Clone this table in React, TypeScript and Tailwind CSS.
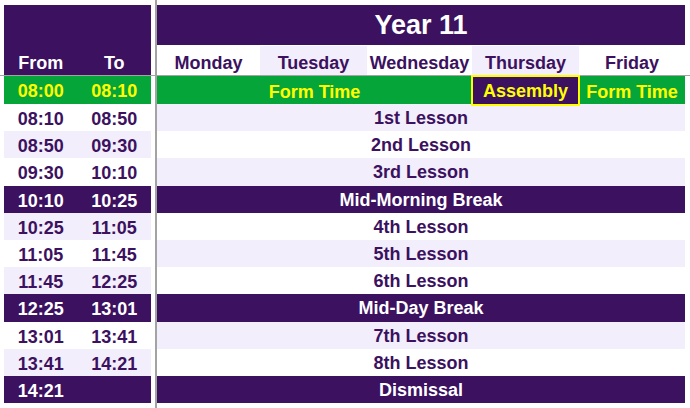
import React from "react";

type Row = {
    from: string;
    to: string;
    label: string;
    isBreak?: boolean;
    leftShade?: boolean;
    rightShade?: boolean;
};

const rows: Row[] = [
    { from: "08:10", to: "08:50", label: "1st Lesson", rightShade: true },
    { from: "08:50", to: "09:30", label: "2nd Lesson", leftShade: true },
    { from: "09:30", to: "10:10", label: "3rd Lesson", rightShade: true },
    { from: "10:10", to: "10:25", label: "Mid-Morning Break", isBreak: true },
    { from: "10:25", to: "11:05", label: "4th Lesson", leftShade: true },
    { from: "11:05", to: "11:45", label: "5th Lesson", rightShade: true },
    { from: "11:45", to: "12:25", label: "6th Lesson", leftShade: true },
    { from: "12:25", to: "13:01", label: "Mid-Day Break", isBreak: true },
    { from: "13:01", to: "13:41", label: "7th Lesson", rightShade: true },
    { from: "13:41", to: "14:21", label: "8th Lesson", leftShade: true },
    { from: "14:21", to: "", label: "Dismissal", isBreak: true },
];

const days = [
    { name: "Monday", shade: false },
    { name: "Tuesday", shade: true },
    { name: "Wednesday", shade: false },
    { name: "Thursday", shade: true },
    { name: "Friday", shade: false },
];

function rowBg(row: Row, side: "left" | "right") {
    if (row.isBreak) return "bg-[#3b1160] text-white";
    const shaded = side === "left" ? row.leftShade : row.rightShade;
    return shaded ? "bg-[#f3eefb] text-[#3b1160]" : "bg-white text-[#3b1160]";
}

export default function App() {
    return (
        <div
            className="w-[690px] h-[408px] bg-white overflow-hidden grid grid-cols-[155px_2px_1fr] grid-rows-[75px_1px_1fr] font-bold text-[18px] text-[#3b1160]"
            style={{ fontFamily: '"Liberation Sans", Arial, sans-serif' }}
        >
            {/* top left: From / To header */}
            <div className="pt-[5px] pl-[4px] pr-[4px]">
                <div className="h-[70px] bg-[#3b1160] text-white flex items-end">
                    <div className="h-[30px] w-full grid grid-cols-2 items-center pt-[5px]">
                        <span className="text-center">From</span>
                        <span className="text-center">To</span>
                    </div>
                </div>
            </div>

            <div className="row-span-3 bg-[#a3a3a3]" />

            {/* top right: title + days */}
            <div className="pt-[5px] pr-[5px]">
                <div className="h-[40px] bg-[#3b1160] text-white text-[27px] flex items-center justify-center pt-[1px]">
                    Year 11
                </div>
                <div className="h-[30px] grid grid-cols-[103px_107px_105px_107px_106px]">
                    {days.map((d) => (
                        <div
                            key={d.name}
                            className={`mt-px flex items-center justify-center pt-[4px] ${d.shade ? "bg-[#f3eefb]" : "bg-white"}`}
                        >
                            {d.name}
                        </div>
                    ))}
                </div>
            </div>

            {/* frozen pane line */}
            <div className="bg-[#a3a3a3] col-start-1 col-end-2" />
            <div className="bg-[#a3a3a3] col-start-3" />

            {/* times */}
            <div className="pl-[4px] pr-[4px]">
                <div className="h-[28px] bg-[#06a53a] text-[#ffff00] grid grid-cols-2 items-center pt-[2px]">
                    <span className="text-center">08:00</span>
                    <span className="text-center">08:10</span>
                </div>
                {rows.map((r) => (
                    <div key={r.from} className={`h-[27.2px] grid grid-cols-2 items-center pt-[2px] ${rowBg(r, "left")}`}>
                        <span className="text-center">{r.from}</span>
                        <span className="text-center">{r.to}</span>
                    </div>
                ))}
            </div>

            {/* lessons */}
            <div className="pr-[5px]">
                <div className="h-[28px] bg-[#06a53a] text-[#ffff00] grid grid-cols-[315px_107px_106px]">
                    <div className="flex items-center justify-center pt-[2px]">Form Time</div>
                    <div className="-mt-[1px] -ml-[1px] -mr-px h-[31px] border-2 border-[#ffff00] bg-[#3b1160] flex items-center justify-center pt-[2px]">
                        Assembly
                    </div>
                    <div className="flex items-center justify-center pt-[2px]">Form Time</div>
                </div>
                {rows.map((r) => (
                    <div key={r.label} className={`h-[27.2px] flex items-center justify-center pt-[2px] ${rowBg(r, "right")}`}>
                        {r.label}
                    </div>
                ))}
            </div>
        </div>
    );
}
